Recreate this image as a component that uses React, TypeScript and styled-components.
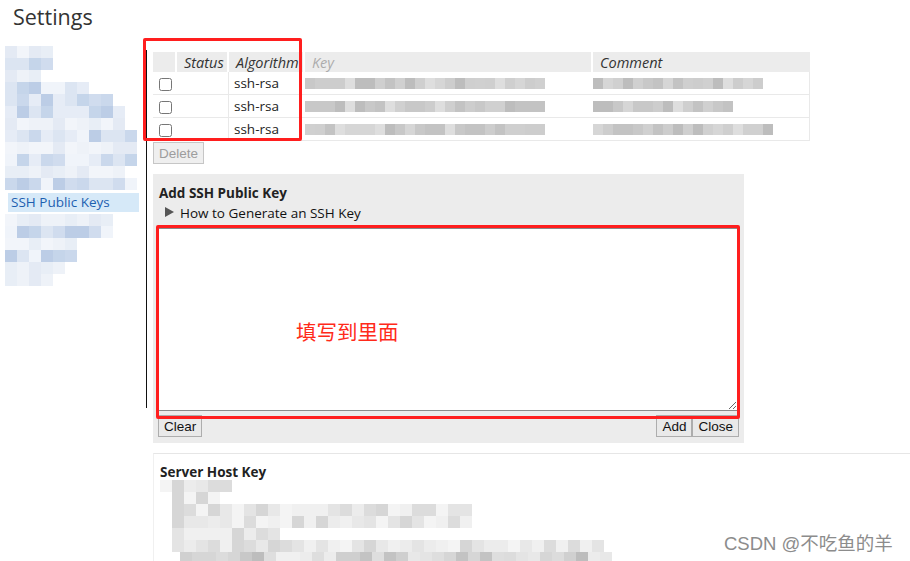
import React from "react";
import styled, { createGlobalStyle } from "styled-components";

const Global = createGlobalStyle`
  html, body { margin: 0; padding: 0; background: #fff; }
  body { font-family: "Open Sans", "Noto Sans", sans-serif; color: #222; }
`;

function rng(seed: number) {
  let s = seed;
  return () => {
    s = (s * 9301 + 49297) % 233280;
    return s / 233280;
  };
}

const BLUES = ["#c5d5ea", "#d0dcee", "#dce5f2", "#e6ecf6", "#f0f4fa", "#bccde6", "#cad8ec"];
const PALE = ["#eef2f8", "#e4eaf4", "#f2f5fa", "#e8eef6"];
const GRAYS = ["#c8c8c8", "#d0d0d0", "#cdcdcd", "#bdbdbd", "#d6d6d6", "#dedede", "#c3c3c3", "#cfcfcf"];
const LIGHT = ["#e4e4e4", "#ececec", "#f0f0f0", "#e8e8e8", "#dcdcdc", "#f4f4f4", "#d6d6d6"];

function strip(seed: number, n: number, pal: string[]) {
  const r = rng(seed);
  return Array.from({ length: n }, () => pal[Math.floor(r() * pal.length)]);
}

const Page = styled.div`
  width: 910px;
  height: 561px;
  position: relative;
  overflow: hidden;
`;

const Title = styled.h1`
  margin: 0;
  padding: 3px 0 0 13px;
  height: 37px;
  font-size: 21.5px;
  font-weight: 400;
  color: #333;
  line-height: 28px;
`;

const Body = styled.div`
  display: flex;
  align-items: flex-start;
`;

const Sidebar = styled.nav`
  width: 146px;
  padding-top: 6px;
  display: flex;
  flex-direction: column;
`;

const Divider = styled.div`
  width: 1px;
  height: 358px;
  margin-top: 10px;
  background: #111;
`;

const MosaicBox = styled.div<{ $indent: number }>`
  display: flex;
  flex-direction: column;
  padding-left: ${(p) => p.$indent}px;
`;

const MosaicRow = styled.div<{ $offset: number }>`
  display: flex;
  padding-left: ${(p) => p.$offset}px;
`;

const Cell = styled.div<{ $c: string; $w: number; $h: number }>`
  width: ${(p) => p.$w}px;
  height: ${(p) => p.$h}px;
  background: ${(p) => p.$c};
  flex: none;
`;

type MRow = { offset?: number; cells: string[] };

function Mosaic({ rows, w, h, indent = 0 }: { rows: MRow[]; w: number; h: number; indent?: number }) {
  return (
    <MosaicBox $indent={indent}>
      {rows.map((row, i) => (
        <MosaicRow key={i} $offset={row.offset ?? 0}>
          {row.cells.map((c, j) => (
            <Cell key={j} $c={c} $w={w} $h={h} />
          ))}
        </MosaicRow>
      ))}
    </MosaicBox>
  );
}

const NavItem = styled.div<{ $active?: boolean }>`
  margin: 3px 7px 2px 8px;
  height: 19px;
  line-height: 19px;
  padding-left: 3px;
  font-size: 13.5px;
  color: #1d5fb0;
  background: ${(p) => (p.$active ? "#d6e9f8" : "transparent")};
`;

const Main = styled.main`
  padding-left: 6px;
  padding-top: 12px;
  flex: 1;
  min-width: 0;
`;

const Table = styled.table`
  border-collapse: separate;
  border-spacing: 0;
  width: 657px;
  font-size: 13.5px;
  table-layout: fixed;
`;

const Th = styled.th<{ $w: number }>`
  box-sizing: border-box;
  width: ${(p) => p.$w}px;
  height: 20px;
  padding: 0 0 0 7px;
  background: #ececec;
  border-right: 2px solid #fff;
  font-style: italic;
  font-weight: 400;
  font-size: 14.5px;
  text-align: left;
  color: #333;
  white-space: nowrap;
  overflow: hidden;
  &:last-child { border-right: none; }
`;

const Td = styled.td<{ $line?: boolean; $flush?: boolean }>`
  box-sizing: border-box;
  height: 23px;
  padding: 0 0 0 ${(p) => (p.$flush ? 0 : 5)}px;
  border-bottom: 1px solid #e9e9e9;
  border-right: ${(p) => (p.$line ? "1px solid #e9e9e9" : "none")};
  color: #222;
  overflow: hidden;
  white-space: nowrap;
`;

const Check = styled.input.attrs({ type: "checkbox" })`
  margin: 0 0 0 1px;
  width: 13px;
  height: 13px;
  vertical-align: middle;
`;

const Faded = styled.span`
  opacity: 0.35;
`;

const Btn = styled.button`
  font-family: "Liberation Sans", Arial, sans-serif;
  font-size: 13.5px;
  height: 22px;
  padding: 0 5px;
  background: #e9e9e9;
  border: 1px solid #adadad;
  border-radius: 0;
  color: #111;
  &:disabled {
    color: #9d9d9d;
    background: #efefef;
    border-color: #c6c6c6;
  }
`;

const DeleteRow = styled.div`
  display: flex;
  margin-top: 1px;
`;

const Panel = styled.section`
  margin-top: 10px;
  width: 591px;
  background: #ececec;
  padding: 9px 6px 6px 5px;
  box-sizing: border-box;
`;

const PanelTitle = styled.div`
  font-weight: 700;
  font-size: 13.5px;
  line-height: 20px;
  padding-left: 1px;
  color: #222;
`;

const Disclosure = styled.div`
  display: flex;
  align-items: center;
  font-size: 13.5px;
  line-height: 20px;
  padding-left: 7px;
  gap: 6px;
  color: #111;
`;

const Tri = styled.span`
  width: 0;
  height: 0;
  border-top: 5px solid transparent;
  border-bottom: 5px solid transparent;
  border-left: 9px solid #555;
  margin-top: -3px;
`;

const KeyArea = styled.textarea`
  display: block;
  margin-top: 5px;
  width: 580px;
  height: 183px;
  box-sizing: border-box;
  border: 1px solid #8a8a8a;
  background: #fff;
  resize: both;
`;

const BtnRow = styled.div`
  display: flex;
  margin-top: 4px;
  width: 581px;
`;

const Spacer = styled.div`
  flex: 1;
`;

const HostSection = styled.section`
  margin-top: 10px;
  border-top: 1px solid #e6e6e6;
  border-left: 1px solid #f0f0f0;
  padding: 10px 0 0 6px;
`;

const HostTitle = styled.div`
  font-weight: 700;
  font-size: 13.5px;
  line-height: 16px;
  color: #222;
`;

const Annot = styled.div<{ $x: number; $y: number; $w: number; $h: number }>`
  position: absolute;
  left: ${(p) => p.$x}px;
  top: ${(p) => p.$y}px;
  width: ${(p) => p.$w}px;
  height: ${(p) => p.$h}px;
  border: 3px solid #ff1e1e;
  border-radius: 2px;
  box-sizing: border-box;
  pointer-events: none;
`;

const Note = styled.div`
  position: absolute;
  left: 296px;
  top: 316px;
  font-family: "Noto Sans CJK SC", sans-serif;
  font-size: 20.5px;
  color: #ff2a1a;
`;

const Watermark = styled.div`
  position: absolute;
  left: 722px;
  top: 529px;
  font-family: "Liberation Sans", "Noto Sans CJK SC", sans-serif;
  font-size: 18.5px;
  color: #8c8c8c;
  background: #fff;
  padding-left: 2px;
`;

const sideTop: MRow[] = [
  { cells: strip(1, 4, PALE) },
  { cells: strip(2, 4, BLUES) },
  { cells: strip(3, 3, PALE) },
  { cells: strip(4, 7, BLUES) },
  { cells: strip(5, 9, BLUES) },
  { cells: strip(6, 10, BLUES) },
  { cells: strip(7, 10, PALE) },
  { cells: strip(8, 11, BLUES) },
  { cells: strip(9, 11, PALE) },
  { cells: strip(10, 11, BLUES) },
  { cells: strip(17, 10, PALE) },
  { cells: strip(18, 11, BLUES) },
];

const sideBottom: MRow[] = [
  { cells: strip(11, 9, PALE) },
  { cells: strip(12, 9, BLUES) },
  { cells: strip(13, 6, PALE) },
  { cells: strip(14, 6, BLUES) },
  { cells: strip(15, 5, PALE) },
  { cells: strip(16, 4, PALE) },
];

const keyRows = [
  { key: strip(21, 24, GRAYS), cmt: strip(31, 17, GRAYS) },
  { key: strip(22, 24, GRAYS), cmt: strip(32, 14, GRAYS) },
  { key: strip(23, 24, GRAYS), cmt: strip(33, 18, GRAYS) },
];

const hostRows: MRow[] = [
  { offset: 0, cells: strip(41, 6, LIGHT) },
  { offset: 12, cells: strip(42, 4, LIGHT) },
  { offset: 12, cells: strip(43, 25, LIGHT) },
  { offset: 12, cells: strip(44, 25, LIGHT) },
  { offset: 12, cells: strip(45, 9, LIGHT) },
  { offset: 12, cells: strip(46, 36, LIGHT) },
  { offset: 20, cells: strip(47, 36, GRAYS.concat(LIGHT)) },
];

const RowStrip = styled.div`
  display: flex;
  height: 11px;
  margin-top: 1px;
`;

function Strip({ cells }: { cells: string[] }) {
  return (
    <RowStrip>
      {cells.map((c, i) => (
        <Cell key={i} $c={c} $w={10} $h={11} />
      ))}
    </RowStrip>
  );
}

export default function App() {
  return (
    <Page>
      <Global />
      <Title>Settings</Title>
      <Body>
        <Sidebar>
          <Mosaic rows={sideTop} w={12} h={12} indent={5} />
          <NavItem $active>SSH Public Keys</NavItem>
          <Mosaic rows={sideBottom} w={12} h={12} indent={5} />
        </Sidebar>
        <Divider />
        <Main>
          <Table>
            <thead>
              <tr>
                <Th $w={24} />
                <Th $w={52}>Status</Th>
                <Th $w={76}>Algorithm</Th>
                <Th $w={288}>
                  <Faded>Key</Faded>
                </Th>
                <Th $w={217}>Comment</Th>
              </tr>
            </thead>
            <tbody>
              {keyRows.map((r, i) => (
                <tr key={i}>
                  <Td>
                    <Check />
                  </Td>
                  <Td $line />
                  <Td>ssh-rsa</Td>
                  <Td $flush>
                    <Strip cells={r.key} />
                  </Td>
                  <Td $line $flush>
                    <Strip cells={r.cmt} />
                  </Td>
                </tr>
              ))}
            </tbody>
          </Table>
          <DeleteRow>
            <Btn disabled>Delete</Btn>
          </DeleteRow>
          <Panel>
            <PanelTitle>Add SSH Public Key</PanelTitle>
            <Disclosure>
              <Tri />
              How to Generate an SSH Key
            </Disclosure>
            <KeyArea />
            <BtnRow>
              <Btn>Clear</Btn>
              <Spacer />
              <Btn>Add</Btn>
              <Btn>Close</Btn>
            </BtnRow>
          </Panel>
          <HostSection>
            <HostTitle>Server Host Key</HostTitle>
            <Mosaic rows={hostRows} w={12} h={12} />
          </HostSection>
        </Main>
      </Body>
      <Annot $x={143} $y={38} $w={159} $h={103} />
      <Annot $x={156} $y={225} $w={584} $h={194} />
      <Note>填写到里面</Note>
      <Watermark>CSDN @不吃鱼的羊</Watermark>
    </Page>
  );
}
